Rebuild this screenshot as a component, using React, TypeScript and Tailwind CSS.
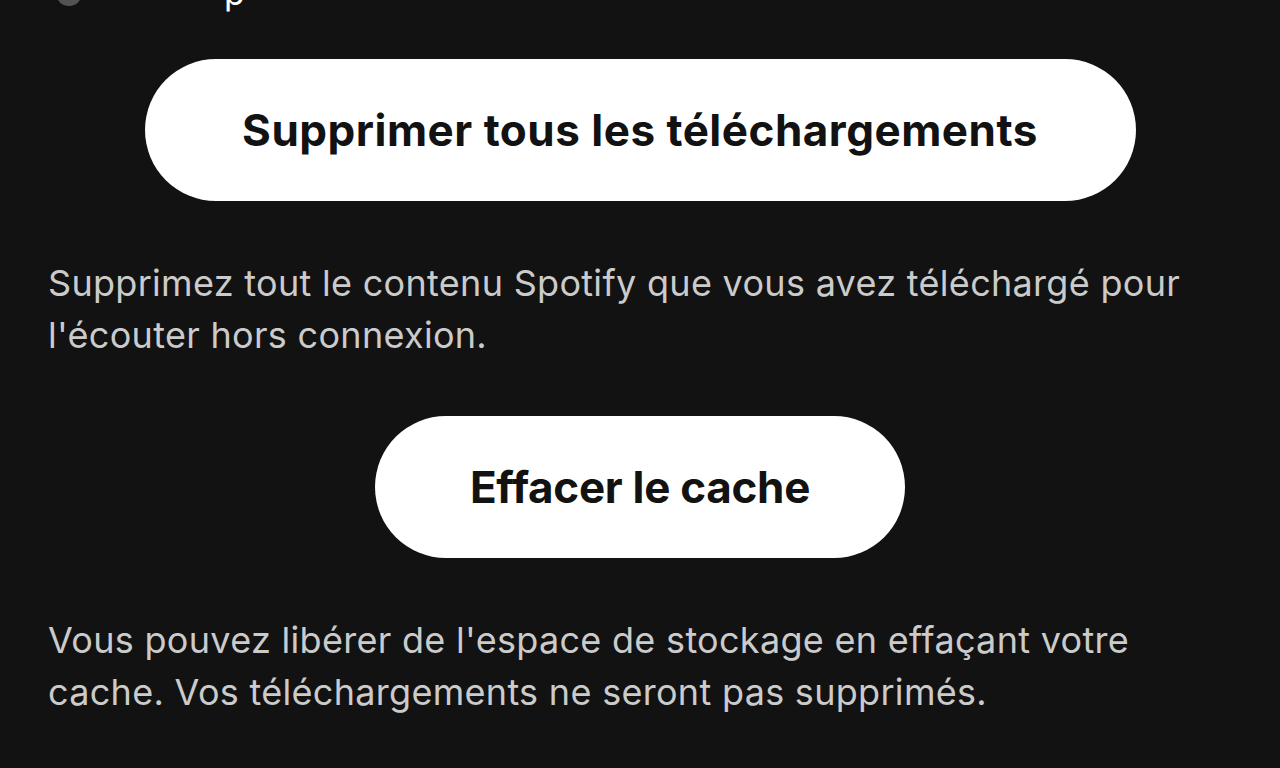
import React from "react";

export default function App() {
  return (
    <div
      className="w-[1280px] h-[768px] overflow-hidden bg-[#121212] px-12"
      style={{ fontFamily: "Inter, 'Noto Sans', sans-serif" }}
    >
      <div className="flex items-center h-[20px] -mt-[17px] ml-[8px] gap-[142px]">
        <div className="w-[26px] h-[26px] rounded-full bg-[#535353]" />
        <span className="text-[34px] text-white leading-none">p</span>
      </div>
      <div className="flex flex-col">
        <div className="flex justify-center mt-[56px]">
          <button className="w-[991px] h-[142px] rounded-full bg-white text-[#121212] text-[44px] font-bold tracking-[0.5px]">
            Supprimer tous les téléchargements
          </button>
        </div>
        <p className="mt-[56px] text-[36px] leading-[52px] text-[#cbcbcb] tracking-[0.3px]">
          Supprimez tout le contenu Spotify que vous avez téléchargé pour l'écouter hors connexion.
        </p>
        <div className="flex justify-center mt-[55px]">
          <button className="w-[530px] h-[142px] rounded-full bg-white text-[#121212] text-[44px] font-bold tracking-[-0.3px]">
            Effacer le cache
          </button>
        </div>
        <p className="mt-[56px] text-[36px] leading-[52px] text-[#cbcbcb] tracking-[0.3px]">
          Vous pouvez libérer de l'espace de stockage en effaçant votre cache. Vos téléchargements ne seront pas supprimés.
        </p>
      </div>
    </div>
  );
}
